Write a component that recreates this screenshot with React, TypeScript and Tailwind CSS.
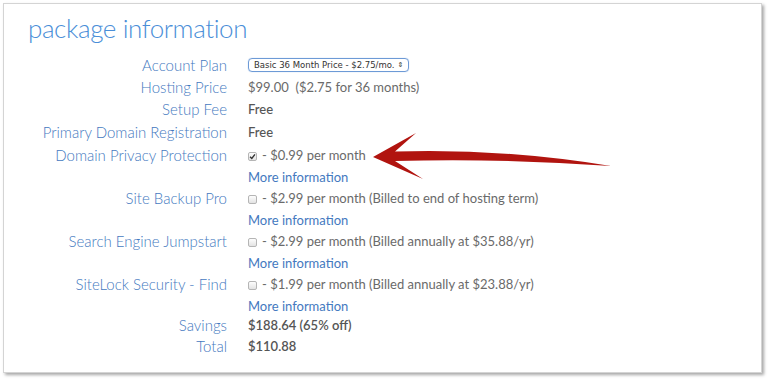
import React from "react";

const Label = ({ children, h = "leading-[22px]" }: { children: React.ReactNode; h?: string }) => (
  <div className={"text-right text-[15px] font-light text-[#4479c0] " + h}>{children}</div>
);

const Check = ({ checked }: { checked?: boolean }) => (
  <span className="inline-flex items-center justify-center w-[9px] h-[9px] rounded-[2px] border border-[#b5b5b5] bg-gradient-to-b from-[#fdfdfd] to-[#e3e3e3] mr-[5px] relative top-[1px]">
    {checked && (
      <svg width="7" height="7" viewBox="0 0 8 8">
        <path d="M1.2 4.2 L3.2 6.2 L6.8 1.6" fill="none" stroke="#333" strokeWidth="1.6" />
      </svg>
    )}
  </span>
);

const More = () => (
  <div className="text-[13px] leading-[20px] text-[#4479c0]">More information</div>
);

const Option = ({ checked, text }: { checked?: boolean; text: string }) => (
  <div>
    <div className="text-[13px] leading-[23px] text-[#6a6a6a] flex items-center">
      <Check checked={checked} />
      {text}
    </div>
    <More />
  </div>
);

export default function App() {
  return (
    <div className="w-[768px] h-[382px] bg-white relative overflow-hidden" style={{ fontFamily: "Lato, 'Open Sans', sans-serif" }}>
      <div className="absolute left-[3px] top-[3px] w-[759px] h-[370px] bg-white border border-[#d4d4d4] shadow-[2px_2px_3px_rgba(0,0,0,0.35)]">
        <div className="pl-[24px] pt-[4px]">
          <h1 className="text-[26px] leading-[40px] font-light tracking-[-0.4px] text-[#4a8ed8]">package information</h1>
          <div className="grid grid-cols-[199px_1fr] gap-x-[21px] mt-[6px]">
            <Label>Account Plan</Label>
            <div className="h-[22px] flex items-center">
              <div className="h-[14px] px-[5px] rounded-[4px] border border-[#6d9ad6] flex items-center text-[8.5px] text-[#333] shadow-[0_0_1px_#8fb4e6]" style={{ fontFamily: "'DejaVu Sans', sans-serif" }}>
                Basic 36 Month Price - $2.75/mo.
                <span className="ml-[3px] text-[7px] leading-none">⇕</span>
              </div>
            </div>

            <Label>Hosting Price</Label>
            <div className="text-[13px] leading-[22px] text-[#6a6a6a]">$99.00&nbsp; ($2.75 for 36 months)</div>

            <Label h="leading-[23px]">Setup Fee</Label>
            <div className="text-[13px] leading-[23px] text-[#555] font-medium">Free</div>

            <Label h="leading-[23px]">Primary Domain Registration</Label>
            <div className="text-[13px] leading-[23px] text-[#555] font-medium">Free</div>

            <Label h="leading-[23px]">Domain Privacy Protection</Label>
            <Option checked text="- $0.99 per month" />

            <Label h="leading-[23px]">Site Backup Pro</Label>
            <Option text="- $2.99 per month (Billed to end of hosting term)" />

            <Label h="leading-[23px]">Search Engine Jumpstart</Label>
            <Option text="- $2.99 per month (Billed annually at $35.88/yr)" />

            <Label h="leading-[23px]">SiteLock Security - Find</Label>
            <Option text="- $1.99 per month (Billed annually at $23.88/yr)" />

            <Label h="leading-[19px]">Savings</Label>
            <div className="text-[13px] leading-[19px] text-[#555] font-semibold">$188.64 (65% off)</div>

            <Label>Total</Label>
            <div className="text-[13px] leading-[22px] text-[#555] font-semibold">$110.88</div>
          </div>
        </div>
      </div>
      <svg className="absolute left-0 top-0" width="768" height="382" viewBox="0 0 768 382">
        <path
          d="M373 157 L416 133 L395 151.5 Q500 148 611 166 Q500 158 395 161 L423 179 Z"
          fill="#b1140f"
        />
      </svg>
    </div>
  );
}
